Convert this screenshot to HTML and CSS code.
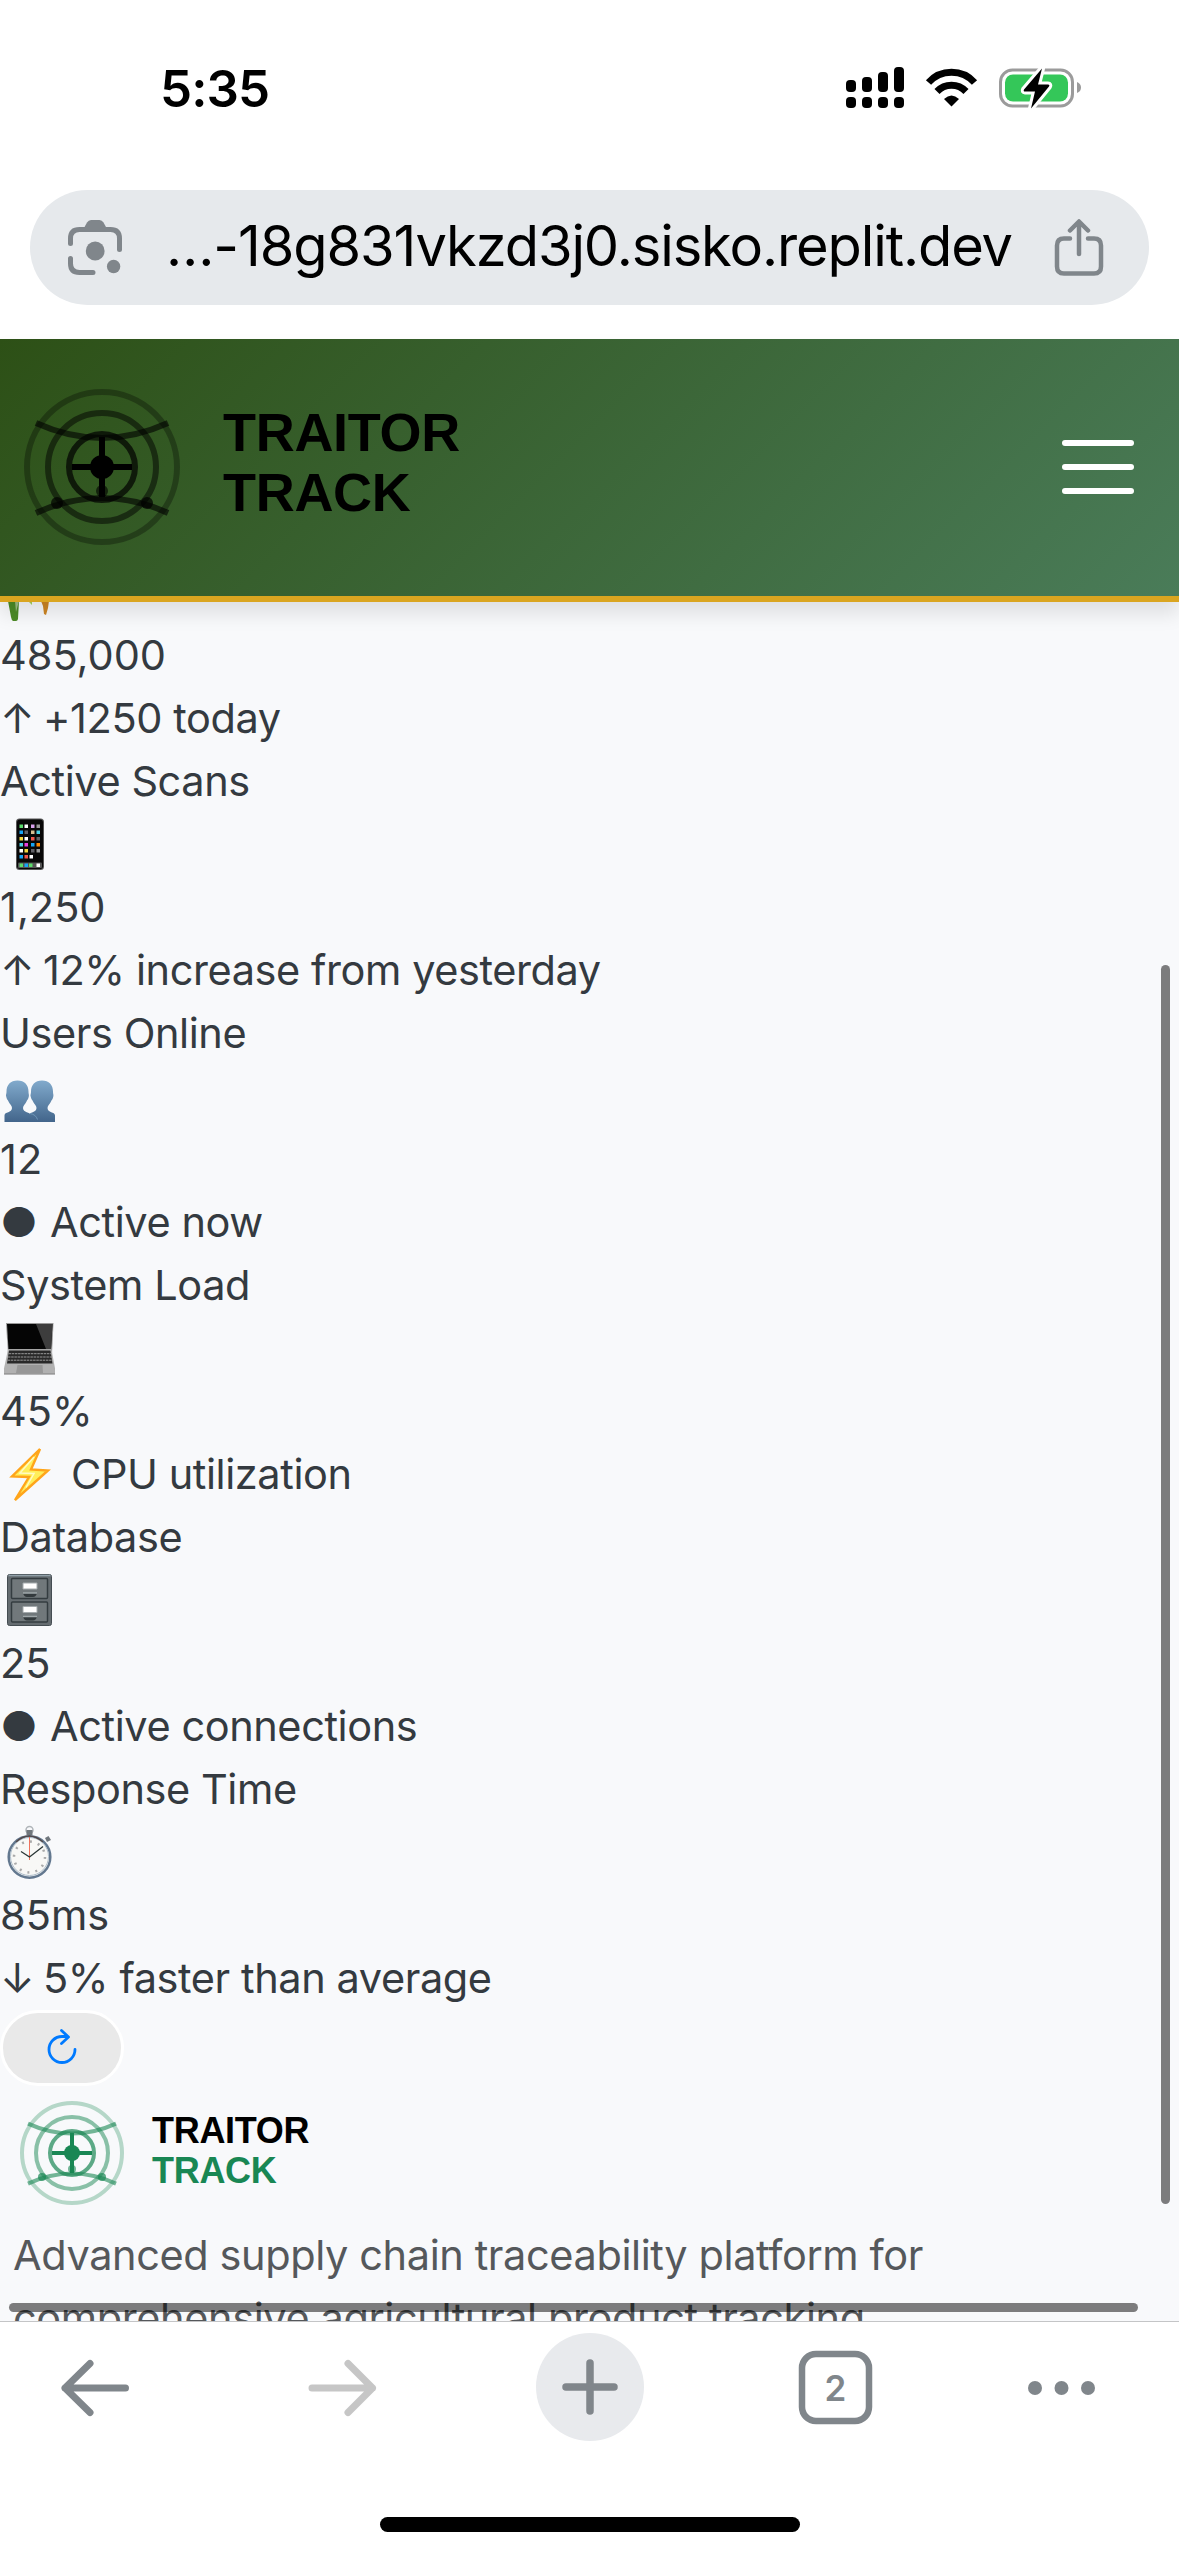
FILE: index.html
```
<!DOCTYPE html>
<html lang="en">
<head>
<meta charset="utf-8">
<title>Traitor Track</title>
<link rel="stylesheet" href="styles.css">
</head>
<body>
<svg class="defs" width="0" height="0" aria-hidden="true">
  <symbol id="radar" viewBox="4 4 52 52">
    <g fill="none" stroke="currentColor" stroke-width="2">
      <circle cx="30" cy="30" r="25" opacity=".3"/>
      <circle cx="30" cy="30" r="18" opacity=".5"/>
      <circle cx="30" cy="30" r="11" opacity=".7"/>
      <path d="M8 15q22 10 44 0M8 45q22-10 44 0" opacity=".6" transform="translate(0 .3)"/>
      <path d="M30 20v20M20 30h20"/>
    </g>
    <g fill="currentColor">
      <circle cx="30" cy="30" r="4"/>
      <circle cx="15" cy="42" r="2" opacity=".7"/>
      <circle cx="45" cy="42" r="2" opacity=".7"/>
      <circle cx="30" cy="38" r="2" opacity=".6"/>
    </g>
  </symbol>
</svg>
<div class="phone">
  <div class="status">
    <span class="time">5:35</span>
    <svg class="status-icons" viewBox="846 60 240 54" width="240" height="54">
      <rect x="846" y="80" width="10" height="12" rx="4"/><rect x="862" y="77" width="10" height="15" rx="4"/><rect x="878" y="72" width="10" height="20" rx="4"/><rect x="894" y="67" width="10" height="25" rx="4"/>
      <rect x="846" y="97" width="10" height="11" rx="4"/><rect x="862" y="97" width="10" height="11" rx="4"/><rect x="878" y="97" width="10" height="11" rx="4"/><rect x="894" y="97" width="10" height="11" rx="4"/>
      <g transform="translate(-1.500 0)">
        <g fill="none" stroke="#000" stroke-width="7"><path d="M930 82.500a31 31 0 0 1 46 0"/><path d="M938.500 91.500a20 20 0 0 1 29 0"/></g>
        <path d="M953 106.500l-7.500-7.500q7.500-7 15 0z"/>
      </g>
      <g transform="translate(-2 .5)">
        <rect x="1002.500" y="69.500" width="72" height="36" rx="12" fill="none" stroke="#9b9b9b" stroke-width="3"/>
        <rect x="1007" y="74" width="63" height="27" rx="8" fill="#34c759"/>
        <path d="M1079 81.500v11q4-1.500 4-5.500t-4-5.500z" fill="#9b9b9b"/>
        <path d="M1044 68l-18 21q-1 2 1 2h10l-4 17 18-22q1-2-1-2h-10z" stroke="#fff" stroke-width="6" stroke-linejoin="round"/>
        <path d="M1044 68l-18 21q-1 2 1 2h10l-4 17 18-22q1-2-1-2h-10z"/>
      </g>
    </svg>
  </div>
  <div class="address">
    <svg class="lens" viewBox="66 218 60 60" width="60" height="60" fill="none" stroke="#80868b" stroke-width="5" stroke-linecap="round">
      <path d="M70.500 243.500v-5q0-9 9-9h31q9 0 9 9v11M70.500 258.500v5q0 9 9 9h13.500"/>
      <g fill="#80868b" stroke="none"><path d="M84 228l3-5.500q1.500-2.500 4-2.500h8.500q2.500 0 4 2.500l3 5.500z"/><circle cx="95.200" cy="251" r="9.400"/><circle cx="113.600" cy="266.500" r="6.700"/></g>
    </svg>
    <span class="url">…-18g831vkzd3j0.sisko.replit.dev</span>
    <svg class="share" viewBox="1052 218 54 62" width="54" height="62" fill="none" stroke="#80868b" stroke-width="4.500" stroke-linecap="round" stroke-linejoin="round">
      <path d="M1070 239.500h-6q-7 0-7 7v21q0 7 7 7h30q7 0 7-7v-21q0-7-7-7h-6M1079 255v-31M1070 231.500l9-9 9 9"/>
    </svg>
  </div>
  <header class="navbar">
    <div class="brand">
      <svg class="brand-mark"><use href="#radar"/></svg>
      <div class="brand-name"><span>TRAITOR</span><span>TRACK</span></div>
    </div>
    <div class="burger"><i></i><i></i><i></i></div>
  </header>
  <main class="page">
    <div class="row peek">
      <svg viewBox="0 41 60 22" width="60" height="22"><path d="M8 40h11l-1 18q-.5 2-2 2h-3q-1.500-1-2-4z" fill="#4d8b27"/><path d="M15 40h4l-3 11z" fill="#9fbd86"/><path d="M29 41l3 3v-3z" fill="#a6d15a"/><path d="M41 40h8l-1 7-2 7-2-1-1-8z" fill="#cd8523"/></svg>
    </div>
    <div class="row num">485,000</div>
    <div class="row"><span class="arrow">↑</span><span>+1250 today</span></div>
    <div class="row">Active Scans</div>
    <div class="row">
      <svg class="emoji" viewBox="0 0 60 63"><rect x="16" y="5.500" width="28" height="51.500" rx="3.500" fill="#555"/><rect x="17" y="6.500" width="26" height="49.500" rx="3" fill="#080808"/><rect x="18" y="49.500" width="24" height="5.500" rx="1" fill="#555"/>
        <g><path d="M19.500 11.500h3.500v3.500h-3.500zM19.500 50.500h3.500v3.500h-3.500zM29 50.500h3.500v3.500h-3.500z" fill="#5bdc6b"/><path d="M24.500 11.500h3.500v3.500h-3.500zM24.500 24h3.500v3.500h-3.500zM19.500 36h3.500v3.500h-3.500zM29.500 42h3.500v3.500h-3.500zM36.500 50.500h3.500v3.500h-3.500z" fill="#fff"/><path d="M31 11.500h3.500v3.500h-3.500z" fill="#d9a2ee"/><path d="M36.500 11.500h3.500v3.500h-3.500zM36.500 36h3.500v3.500h-3.500z" fill="#999"/><path d="M19.500 17.500h3.500v3.500h-3.500zM31 30h3.500v3.500h-3.500zM19.500 42h3.500v3.500h-3.500zM24.500 50.500h3.500v3.500h-3.500z" fill="#16a5f5"/><path d="M24.500 17.500h3.500v3.500h-3.500zM36.500 24h3.500v3.500h-3.500zM31 36h3.500v3.500h-3.500z" fill="#606066"/><path d="M31 17.500h3.500v3.500h-3.500z" fill="#d6bd91"/><path d="M36.500 17.500h3.500v3.500h-3.500zM19.500 30h3.500v3.500h-3.500z" fill="#4bd0e6"/><path d="M19.500 24h3.500v3.500h-3.500zM24.500 36h3.500v3.500h-3.500z" fill="#f4d83e"/><path d="M31 24h3.500v3.500h-3.500zM24.500 42h3.500v3.500h-3.500z" fill="#f0554c"/><path d="M24.500 30h3.500v3.500h-3.500z" fill="#e93fe0"/><path d="M36.500 30h3.500v3.500h-3.500z" fill="#ff8a00"/></g></svg>
    </div>
    <div class="row num">1,250</div>
    <div class="row"><span class="arrow">↑</span><span>12% increase from yesterday</span></div>
    <div class="row">Users Online</div>
    <div class="row">
      <svg class="emoji" viewBox="0 0 60 63"><defs><linearGradient id="bust" x1="0" y1="15" x2="0" y2="57" gradientUnits="userSpaceOnUse"><stop offset="0" stop-color="#82abcd"/><stop offset="1" stop-color="#42658b"/></linearGradient><path id="person" d="M42 15.500c7 0 11 4.500 11 11 0 3 .8 3 .3 5-.5 3-1.500 3-2.300 5-1 2.500-3.500 4-3.500 6.500 0 5 7.500 3.500 7.500 7.500V57H29V50.500c0-4 7.500-2.500 7.500-7.500 0-2.500-2.500-4-3.500-6.500-.8-2-1.800-2-2.300-5-.5-2 .3-2 .3-5 0-6.500 4-11 11-11z"/></defs><use href="#person" fill="url(#bust)"/><use href="#person" x="-24.500" fill="url(#bust)"/><path d="M30 48.500q6 1 7.500 6" fill="none" stroke="#6f97b9" stroke-width="1"/></svg>
    </div>
    <div class="row num">12</div>
    <div class="row"><span class="dot">●</span><span>Active now</span></div>
    <div class="row">System Load</div>
    <div class="row">
      <svg class="emoji" viewBox="0 0 60 63"><path d="M6 6h47.500l-1.500 31h-44z" fill="#999"/><path d="M7 7h45.500l-1.500 25h-42.500z" fill="#050505"/><path d="M36 7h16.500l-1.500 25h-5z" fill="#3d3d3d"/><path d="M8 32.500h43.500l3.500 19v6H4v-6z" fill="#b1b1b1"/><path d="M9 33.500h41.500l2 13H7z" fill="#292929"/><path d="M8.500 36.700h43M8 40h44M7.500 43.200h45" stroke="#999" stroke-width="1" stroke-dasharray="2.500 .7"/><path d="M17.500 48h25l.5 8H16z" fill="#979797"/><path d="M4 56h51v1.500H4z" fill="#999"/></svg>
    </div>
    <div class="row num">45%</div>
    <div class="row"><svg class="emoji bolt" viewBox="0 0 60 63"><path d="M40 6L12 33.500l17 .5-14 23 33-29.500-17-1z" fill="#ffef5a" stroke="#ffa51b" stroke-width="2.400"/><path d="M34 14L20 30l14 .5-8 14" fill="none" stroke="#fffac5" stroke-width="1.500"/></svg><span>CPU utilization</span></div>
    <div class="row">Database</div>
    <div class="row">
      <svg class="emoji" viewBox="0 0 60 63"><rect x="7.500" y="5.500" width="44" height="51" rx="2" fill="#656c70" stroke="#454d52"/><path d="M8.500 6.500h42" stroke="#91a0a8" stroke-width="1.500"/><rect x="11.500" y="9.500" width="36" height="20" rx="1" fill="#71787b" stroke="#343c40" stroke-width="1.500"/><rect x="11.500" y="33" width="36" height="20" rx="1" fill="#71787b" stroke="#343c40" stroke-width="1.500"/><path d="M23 14h14v6H23zM23 37.500h14v6H23z" fill="#fff" stroke="#a4aaad"/><path d="M23 24h14q-1 4-4 4h-6q-3 0-4-4zM23 47.500h14q-1 4-4 4h-6q-3 0-4-4z" fill="#333a3d"/><path d="M23 24h14M23 47.500h14" stroke="#a0a8aa" stroke-width="1.300"/></svg>
    </div>
    <div class="row num">25</div>
    <div class="row"><span class="dot">●</span><span>Active connections</span></div>
    <div class="row">Response Time</div>
    <div class="row">
      <svg class="emoji" viewBox="0 0 60 63"><circle cx="29.500" cy="9" r="3.500" fill="none" stroke="#b0b5b9" stroke-width="1.500"/><path d="M26.500 9h6v5h-6z" fill="#70777d"/><path d="M45 17l3.500-2 2.500 4-4 2z" fill="#70777d"/><circle cx="29.500" cy="36" r="20.800" fill="#f8f8f6" stroke="#63788f" stroke-width="2.500"/><circle cx="29.500" cy="35.500" r="19" fill="none" stroke="#aebdca" stroke-width="1"/><path d="M16 21q13-12 27 0" fill="none" stroke="#52494a" stroke-width="1.500"/><circle cx="29.500" cy="36" r="15.500" fill="none" stroke="#aaa" stroke-width="2.500" stroke-dasharray="2 6.115"/><path d="M29.500 39V16" stroke="#ef725c" stroke-width="1"/><path d="M21 30.500l8.500 5.500L43 25.500" fill="none" stroke="#293535" stroke-width="1.300"/></svg>
    </div>
    <div class="row num">85ms</div>
    <div class="row"><span class="arrow">↓</span><span>5% faster than average</span></div>
    <div class="refresh"><svg viewBox="46 2026 32 38" width="32" height="38" fill="none" stroke="#007aff" stroke-width="2.800" stroke-linecap="round" stroke-linejoin="round"><path d="M75 2048.500a13 13 0 1 1-13-13h5.500M61.500 2029.500l7 6.500-7 6.500"/></svg></div>
    <footer class="footer">
      <div class="brand small">
        <svg class="brand-mark"><use href="#radar"/></svg>
        <div class="brand-name"><span>TRAITOR</span><span class="green">TRACK</span></div>
      </div>
      <p>Advanced supply chain traceability platform for<br>comprehensive agricultural product tracking</p>
    </footer>
    <div class="scroll-y"></div>
    <div class="scroll-x"></div>
  </main>
  <nav class="toolbar">
    <svg viewBox="0 2325 1179 130" width="1179" height="130" fill="none" stroke="#80868b" stroke-width="6.500" stroke-linecap="round" stroke-linejoin="round">
      <path d="M125.500 2388H65M90 2363.500L65 2388l25 24.500" stroke-width="7"/>
      <path d="M312 2388h60.500M348 2363.500l24.500 24.500-24.500 24.500" stroke="#c6c6c6" stroke-width="7"/>
      <circle cx="590" cy="2387" r="54" fill="#e8eaed" stroke="none"/>
      <path d="M590 2363v48M566 2387h48" stroke-width="7.500"/>
      <rect x="802" y="2354" width="67" height="67" rx="14"/>
      <g fill="#80868b" stroke="none"><circle cx="1035" cy="2388" r="7"/><circle cx="1061.500" cy="2388" r="7"/><circle cx="1088" cy="2388" r="7"/><text class="tab-count" x="835.500" y="2400.500" text-anchor="middle">2</text></g>
    </svg>
    <div class="home"></div>
  </nav>
</div>
</body>
</html>
```
FILE: styles.css
```
* { box-sizing: border-box; }

body {
  margin: 0;
  background: #fff;
  color: #343a40;
  font-family: Inter, "Noto Sans", sans-serif;
}

.defs { display: block; }

.phone {
  display: flex;
  flex-direction: column;
  width: 1179px;
  height: 2556px;
  overflow: hidden;
}

.status {
  display: flex;
  justify-content: space-between;
  height: 190px;
  padding: 60px 93px 0 160px;
  color: #000;
}

.time {
  padding-top: 1px;
  font-size: 51px;
  font-weight: 600;
  line-height: 56px;
  letter-spacing: -0.9px;
}

.address {
  display: flex;
  align-items: center;
  justify-content: space-between;
  width: 1119px;
  height: 115px;
  margin: 0 auto 34px;
  padding: 0 43px 0 36px;
  border-radius: 58px;
  background: #e6e9ec;
}

.url {
  padding-bottom: 4px;
  color: #000;
  font-size: 56px;
  line-height: 60px;
  letter-spacing: -1.1px;
  white-space: nowrap;
}

.navbar {
  position: relative;
  z-index: 2;
  display: flex;
  align-items: center;
  justify-content: space-between;
  flex: none;
  height: 263px;
  padding: 0 45px 2px 24px;
  border-bottom: 6px solid #daa520;
  background: linear-gradient(135deg, #2d5016 0%, #4a7c59 100%);
  box-shadow: 0 12px 18px rgba(0, 0, 0, 0.1);
}

.brand {
  display: flex;
  align-items: center;
  gap: 43px;
}

.brand-mark {
  width: 156px;
  height: 156px;
  color: #000;
}

.brand-name {
  display: flex;
  flex-direction: column;
  padding-bottom: 9px;
  color: #000;
  font: bold 54px/60px "Liberation Sans", Arial, sans-serif;
  letter-spacing: -0.3px;
}

.burger {
  display: flex;
  flex-direction: column;
  gap: 18px;
}

.burger i {
  width: 72px;
  height: 6px;
  border-radius: 3px;
  background: #fff;
}

.page {
  position: relative;
  flex: none;
  height: 1719px;
  overflow: hidden;
  background: #f8f9fb;
}

.row {
  display: flex;
  height: 63px;
  font-size: 41.5px;
  line-height: 63px;
  letter-spacing: -0.42px;
  white-space: nowrap;
}

.row.num { letter-spacing: 0; }

.row.peek { height: 22px; }

.emoji {
  width: 60px;
  height: 63px;
}

.bolt { margin-right: 11px; }

.arrow { width: 43px; }

.dot { width: 50px; }

.refresh {
  display: flex;
  align-items: center;
  justify-content: center;
  width: 124px;
  height: 76px;
  padding-bottom: 5px;
  border: 3px solid #fff;
  border-radius: 38px;
  background: #e9e9e9;
}

.footer { padding: 15px 13px 0; }

.small {
  gap: 28px;
  padding-left: 7px;
  height: 104px;
}

.small .brand-mark {
  width: 104px;
  height: 104px;
  color: #198754;
}

.small .brand-name {
  padding-bottom: 4px;
  font-size: 36px;
  line-height: 40px;
}

.green { color: #198754; }

.footer p {
  margin: 19px 0 0;
  color: #55585b;
  font-size: 41.5px;
  line-height: 63px;
  letter-spacing: -0.4px;
  white-space: nowrap;
}

.scroll-y,
.scroll-x {
  position: absolute;
  border-radius: 5px;
  background: rgba(0, 0, 0, 0.5);
}

.scroll-y {
  top: 363px;
  right: 9px;
  width: 9px;
  height: 1239px;
}

.scroll-x {
  bottom: 9px;
  left: 9px;
  width: 1129px;
  height: 9px;
}

.toolbar {
  display: flex;
  flex-direction: column;
  align-items: center;
  flex: 1;
  padding-top: 3px;
  border-top: 1px solid #c4c5c7;
}

.tab-count {
  font-size: 35px;
  font-weight: 600;
}

.home {
  width: 420px;
  height: 15px;
  margin-top: 62px;
  border-radius: 8px;
  background: #000;
}
```
